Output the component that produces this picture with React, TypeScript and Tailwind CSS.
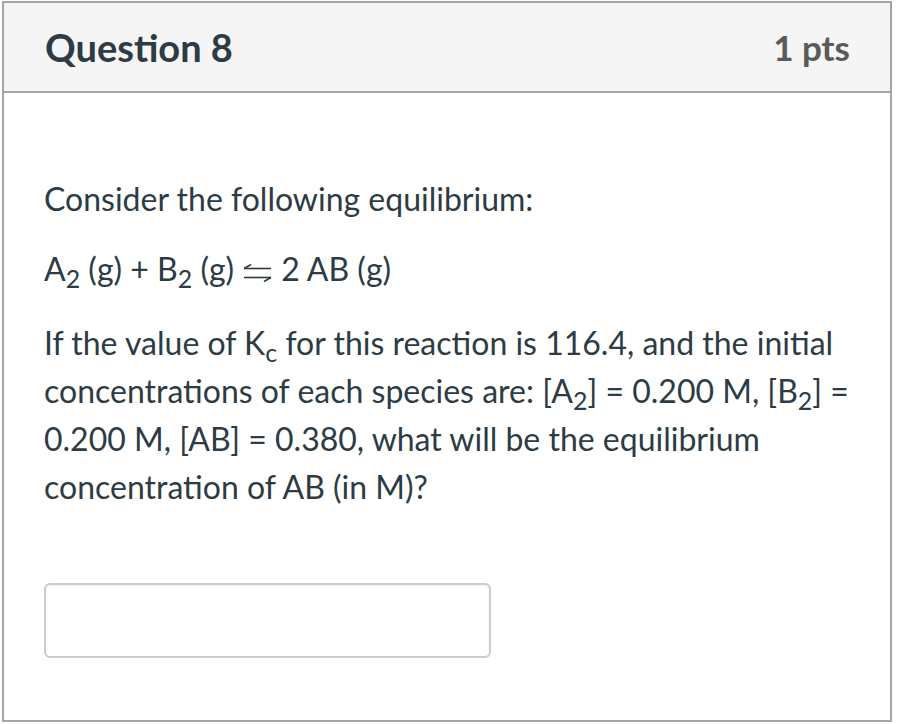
import React from "react";

function Eq() {
  return (
    <svg width="31" height="20" viewBox="0 0 31 20" className="inline-block align-[-1px] mx-[8px]" fill="none" stroke="#2d3b45" strokeWidth="1.6">
      <path d="M2 6.5 H29" />
      <path d="M2 6.5 L9 2.5" />
      <path d="M2 15.5 H29" />
      <path d="M29 15.5 L22 19.5" />
    </svg>
  );
}

export default function App() {
  const sub = "text-[0.78em] align-[-0.3em] leading-none";
  return (
    <div className="w-[900px] h-[724px] bg-white pt-[1px] pl-[2px]" style={{ fontFamily: "Lato, 'Noto Sans', sans-serif" }}>
      <div className="w-[890px] h-[721px] border-2 border-[#a5a5a5] flex flex-col">
        <div className="h-[90px] shrink-0 bg-[#f5f5f5] border-b-2 border-[#a5a5a5] flex items-center justify-between pl-[41px] pr-[40px]">
          <div className="text-[38px] font-bold text-[#2d3b45]">Question 8</div>
          <div className="text-[35px] font-bold text-[#5a5a5a]">1 pts</div>
        </div>
        <div className="pl-[40px] pr-[38px] pt-[82px] text-[32px] leading-[48px] text-[#2d3b45]">
          <p>Consider the following equilibrium:</p>
          <p className="mt-[22px]">
            A<span className={sub}>2</span> (g) + B<span className={sub}>2</span> (g)
            <Eq />2 AB (g)
          </p>
          <p className="mt-[26px]">
            If the value of K<span className={sub}>c</span> for this reaction is 116.4, and the initial concentrations of each
            species are: [A<span className={sub}>2</span>] = 0.200 M, [B<span className={sub}>2</span>] = 0.200 M, [AB] = 0.380,
            what will be the equilibrium concentration of AB (in M)?
          </p>
          <div className="mt-[72px] w-[447px] h-[75px] rounded-[6px] border-2 border-[#cccccc] shadow-[inset_0_1px_2px_rgba(0,0,0,0.08)]" />
        </div>
      </div>
    </div>
  );
}
